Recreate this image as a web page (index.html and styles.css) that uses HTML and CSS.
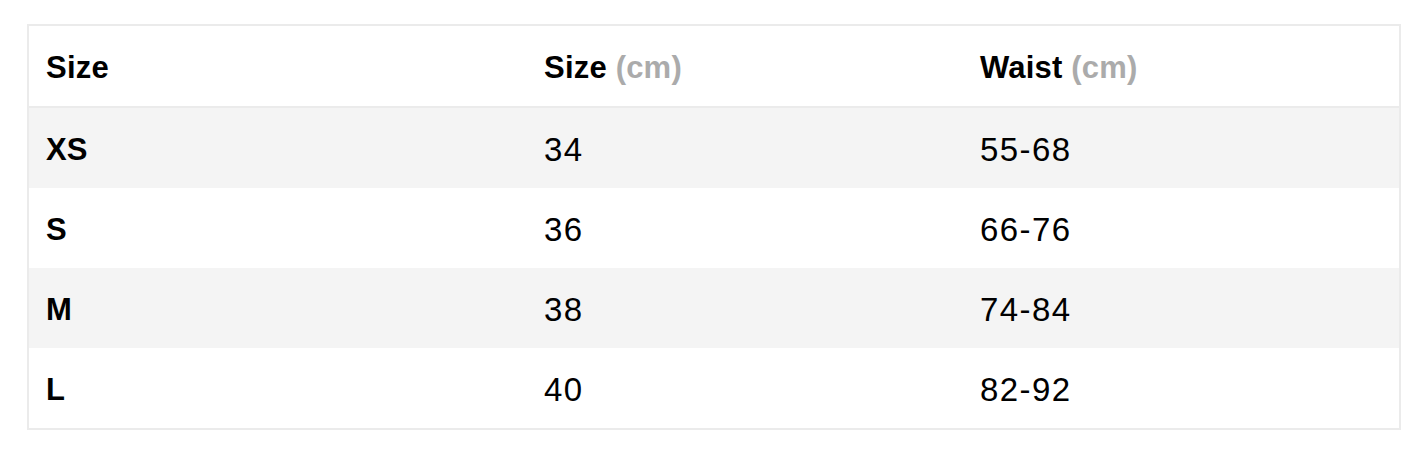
FILE: index.html
```html
<!DOCTYPE html>
<html>
<head>
<meta charset="utf-8">
<link rel="stylesheet" href="styles.css">
</head>
<body>
<div class="wrap">
<table class="sizes">
  <colgroup>
    <col class="c1"><col class="c2"><col class="c3">
  </colgroup>
  <thead>
    <tr><th>Size</th><th>Size <span class="unit">(cm)</span></th><th>Waist <span class="unit">(cm)</span></th></tr>
  </thead>
  <tbody>
    <tr class="alt"><td class="lbl">XS</td><td>34</td><td>55-68</td></tr>
    <tr><td class="lbl">S</td><td>36</td><td>66-76</td></tr>
    <tr class="alt"><td class="lbl">M</td><td>38</td><td>74-84</td></tr>
    <tr><td class="lbl">L</td><td>40</td><td>82-92</td></tr>
  </tbody>
</table>
</div>
</body>
</html>
```
FILE: styles.css
```css
html, body { margin: 0; padding: 0; background: #fff; }
.wrap { padding: 24px 19px 0 27px; }
.sizes {
  width: 100%;
  border-collapse: separate;
  border-spacing: 0;
  border: 2px solid #ebebeb;
  font-family: "Liberation Sans", Arial, sans-serif;
  font-size: 31px;
  color: #000;
  table-layout: fixed;
}
.c1 { width: 498px; }
.c2 { width: 436px; }
.c3 { width: 436px; }
.sizes th, .sizes td {
  height: 80px;
  padding: 3px 0 0 17px;
  text-align: left;
  vertical-align: middle;
  box-sizing: border-box;
}
.sizes th { font-weight: 700; border-bottom: 2px solid #ebebeb; height: 82px; letter-spacing: 0.2px; }
.sizes td { font-size: 33px; letter-spacing: 1.4px; }
.sizes .unit { color: #ababab; }
.sizes td.lbl { font-weight: 700; font-size: 31px; letter-spacing: 0; }
.sizes tr.alt td { background: #f4f4f4; }
```
